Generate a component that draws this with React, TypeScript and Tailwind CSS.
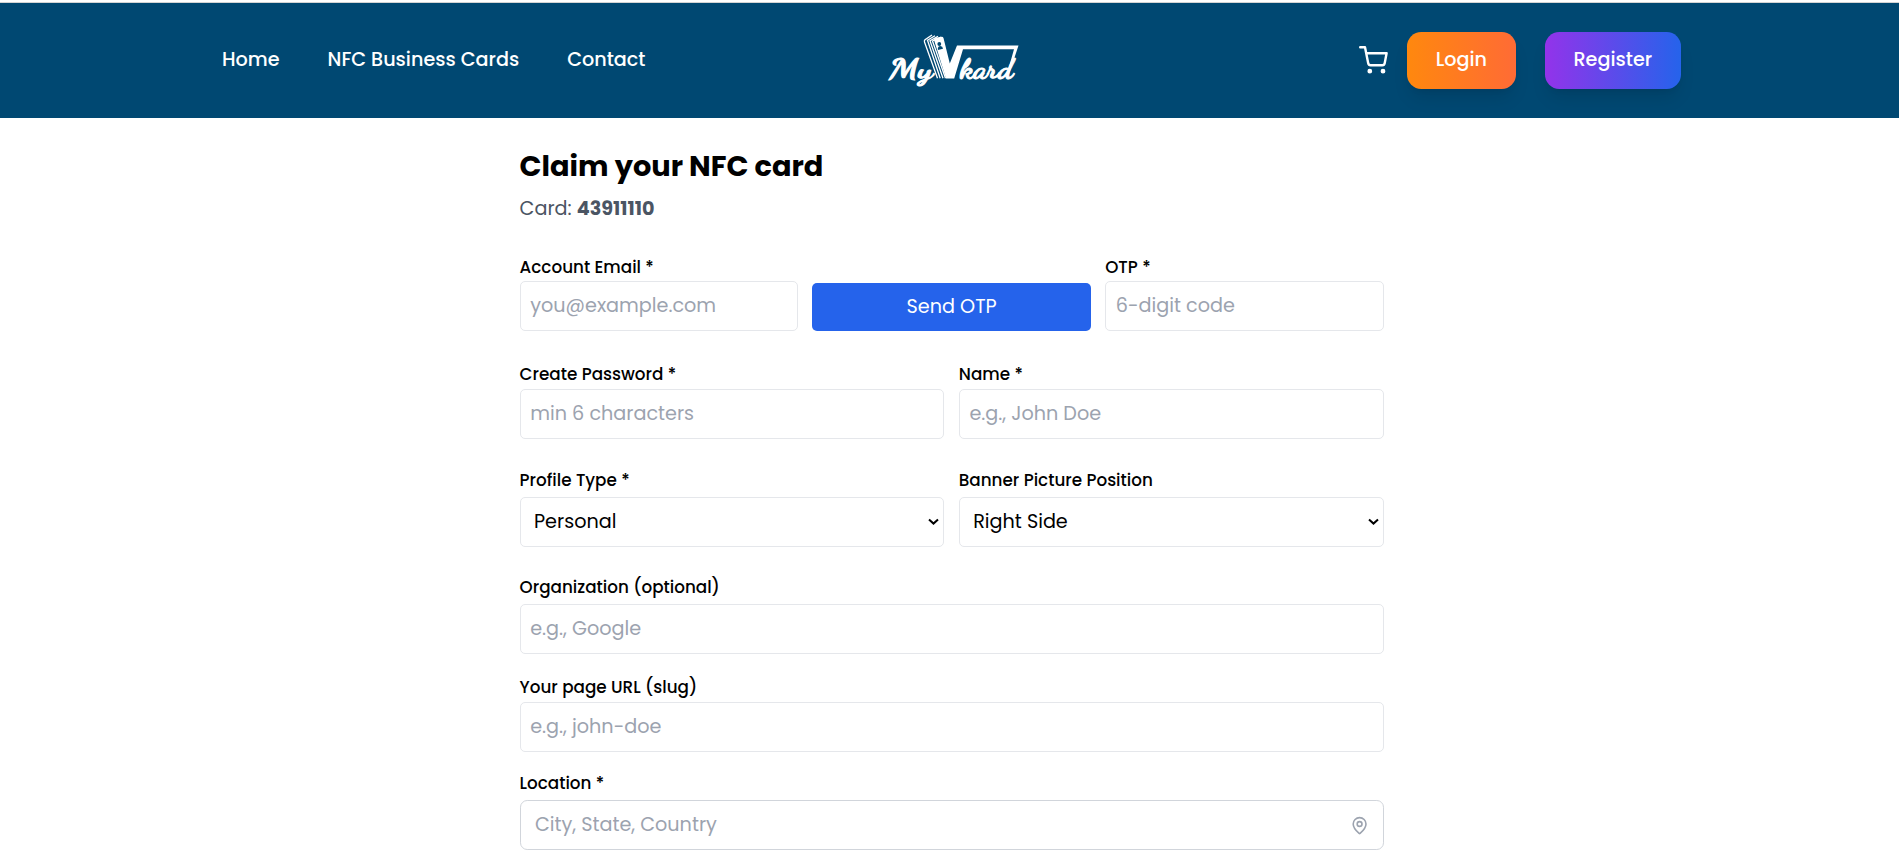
import type { ReactNode } from "react";
import { FiShoppingCart } from "react-icons/fi";
import { MapPin } from "lucide-react";

const inputClass =
  "block h-[50px] w-full rounded-[5px] border border-[#e5e7eb] bg-white px-[9.6px] pb-[2px] text-[19.2px] leading-[28.8px] text-black placeholder:text-[#9ca3af]";

function Label({ children }: { children: ReactNode }) {
  return <label className="block h-6 text-[16.8px] font-medium leading-6">{children}</label>;
}

function TextField({ label, placeholder, className = "" }: { label: string; placeholder: string; className?: string }) {
  return (
    <div className={`flex flex-col ${className}`}>
      <Label>{label}</Label>
      <input className={inputClass} placeholder={placeholder} />
    </div>
  );
}

function SelectField({ label, options }: { label: string; options: string[] }) {
  return (
    <div className="flex flex-col gap-[5px]">
      <Label>{label}</Label>
      <div className="relative">
        <select className="block h-[50px] w-full appearance-none rounded-[5px] border border-[#e5e7eb] bg-white px-[13.4px] text-[19.2px] leading-[28.8px] text-black">
          {options.map((o) => (
            <option key={o}>{o}</option>
          ))}
        </select>
        <svg className="pointer-events-none absolute right-[5px] top-[21px] h-[8px] w-[11px]" viewBox="0 0 11 8" fill="none" stroke="#000" strokeWidth="2">
          <path d="M1 1.6 5.5 5.6 10 1.6" />
        </svg>
      </div>
    </div>
  );
}

function Logo() {
  return (
    <svg className="mb-[1px] h-[60px] w-[140px]" viewBox="882 30 140 60" fill="#fff" role="img" aria-label="MyVkard">
      <g className="font-['Dancing_Script','Liberation_Serif',serif]" fontWeight="700" stroke="#fff" strokeWidth="1">
        <text x="889" y="78.3" fontSize="28.5" textLength="44" lengthAdjust="spacingAndGlyphs">My</text>
        <text x="960" y="77.5" fontSize="28" textLength="53" lengthAdjust="spacingAndGlyphs">kard</text>
      </g>
      <path d="M934 40 Q934 38.5 935.5 38 L941.5 36.7 Q943 36.5 943.5 38 L949.8 63.5 L957 45.5 H1018.5 L1009 74 L1007 74 L1014 49.3 H963 L954.2 78.5 H946 Z" />
      <path d="M932 35 L925 39.7 Q924 41 924.5 42 L937.5 78.3 M935 35.7 L927.5 40.2 L940.2 78.3 M938 36.4 L930 40.7 L943 78.3 M941 37 L932.5 41 L945.5 78.3" fill="none" stroke="#fff" strokeWidth="1.3" />
      <g fill="#004872">
        <circle cx="939.3" cy="44" r="1.9" />
        <path d="M937.9 50 Q937.5 46.2 940.3 46 Q942.8 46.2 943 48.8 Z" />
      </g>
    </svg>
  );
}

export default function App() {
  return (
    <div className="h-[864px] overflow-hidden bg-white font-['Poppins','Inter',sans-serif] text-[19.2px] leading-[28.8px] text-black">
      <div className="h-[3px] border-b border-[#d4d4d4] bg-white" />
      <header className="flex h-[115px] items-center bg-[#004872]">
        <nav className="flex w-[666px] gap-12 pl-[222px] font-medium text-white">
          <a>Home</a>
          <a>NFC Business Cards</a>
          <a>Contact</a>
        </nav>
        <div className="flex w-[693px] pl-[216px]">
          <Logo />
        </div>
        <div className="flex items-center font-medium text-white">
          <FiShoppingCart className="size-[28.8px]" />
          <button className="ml-[19px] h-[57.6px] w-[109px] rounded-[14.4px] bg-linear-to-r/srgb from-[#ff880e] to-[#ff6b35] shadow-[0_12px_18px_-3.6px_rgb(0_0_0/0.1),0_4.8px_7.2px_-4.8px_rgb(0_0_0/0.1)]">
            Login
          </button>
          <button className="ml-[29px] h-[57.6px] w-[136px] rounded-[14.4px] bg-linear-to-r/srgb from-[#9333ea] to-[#2563eb] shadow-[0_12px_18px_-3.6px_rgb(0_0_0/0.1),0_4.8px_7.2px_-4.8px_rgb(0_0_0/0.1)]">
            Register
          </button>
        </div>
      </header>
      <main className="ml-[519.6px] w-[864px] pt-[29px]">
        <h1 className="text-[28.8px] font-bold leading-[38.4px]">Claim your NFC card</h1>
        <p className="mt-[10px] text-[#4b5563]">
          Card: <b className="font-bold">43911110</b>
        </p>
        <form className="mt-[31px] flex flex-col">
          <div className="grid grid-cols-3 items-end gap-[14.4px]">
            <TextField label="Account Email *" placeholder="you@example.com" className="gap-[2px]" />
            <button type="button" className="h-[48px] rounded-[5px] bg-[#2563eb] text-white">
              Send OTP
            </button>
            <TextField label="OTP *" placeholder="6-digit code" className="gap-[2px]" />
          </div>
          <div className="mt-[31px] grid grid-cols-2 gap-[14.4px]">
            <TextField label="Create Password *" placeholder="min 6 characters" className="gap-[3px]" />
            <TextField label="Name *" placeholder="e.g., John Doe" className="gap-[3px]" />
          </div>
          <div className="mt-[29px] grid grid-cols-2 gap-[14.4px]">
            <SelectField label="Profile Type *" options={["Personal", "Business"]} />
            <SelectField label="Banner Picture Position" options={["Right Side", "Left Side"]} />
          </div>
          <TextField label="Organization (optional)" placeholder="e.g., Google" className="mt-[28px] gap-[5px]" />
          <TextField label="Your page URL (slug)" placeholder="e.g., john-doe" className="mt-[21px] gap-[3px]" />
          <div className="mt-[19px] flex flex-col gap-[5px]">
            <Label>Location *</Label>
            <div className="flex h-[50px] items-center rounded-[7.2px] border border-[#d1d5db] pl-[14.4px] pr-[13.4px]">
              <input className="min-w-0 flex-1 placeholder:text-[#9ca3af]" placeholder="City, State, Country" />
              <MapPin className="size-[19.2px] text-[#9ca3af]" />
            </div>
          </div>
        </form>
      </main>
    </div>
  );
}
